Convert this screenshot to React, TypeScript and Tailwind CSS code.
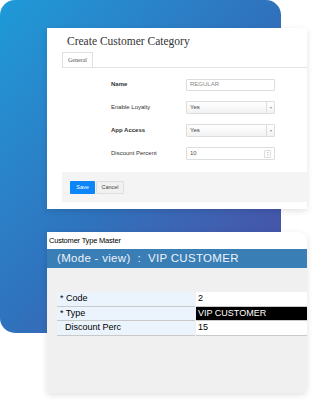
export default function App() {
  const rows = [
    { label: '* Code', value: '2' },
    { label: '* Type', value: 'VIP CUSTOMER', dark: true },
    { label: 'Discount Perc', value: '15', indent: true },
  ]

  return (
    <div className="w-[316px] h-[405px] bg-white overflow-hidden">
      {/* blue backdrop */}
      <div className="w-[281px] h-[333px] rounded-[15px] bg-gradient-to-br from-[#1d9ad8] via-[#2f72bd] to-[#4a48a0] pt-[28px] pl-[47px]">
        {/* Create Customer Category */}
        <div className="w-[260px] h-[181px] bg-white shadow-[0_2px_6px_rgba(0,0,0,0.12)] flex flex-col">
          <div className="pl-[20px] pt-[5px] h-[24px] text-[11.5px] text-[#333] font-['Liberation_Serif',serif]">
            Create Customer Category
          </div>
          <div className="ml-[15px] flex border-b border-[#e3e3e3] h-[16px]">
            <div className="w-[31px] border border-b-0 border-[#e0e0e0] text-[6px] text-[#555] flex items-center justify-center font-['Liberation_Serif',serif]">
              General
            </div>
          </div>
          <div className="flex flex-col gap-[10px] pt-[10px] font-['Liberation_Sans',sans-serif] text-[6px] text-[#333]">
            <FormRow label="Name" bold>
              <div className="w-[89px] h-[12px] border border-[#ddd] rounded-[1px] px-[3px] flex items-center text-[#888]">REGULAR</div>
            </FormRow>
            <FormRow label="Enable Loyalty">
              <Select value="Yes" />
            </FormRow>
            <FormRow label="App Access" bold>
              <Select value="Yes" />
            </FormRow>
            <FormRow label="Discount Percent">
              <div className="w-[89px] h-[13px] border border-[#ddd] rounded-[1px] px-[3px] flex items-center justify-between text-[#555]">
                <span>10</span>
                <span className="w-[7px] h-[8px] border border-[#ddd] rounded-[1px] text-[3px] leading-[3px] text-[#aaa] flex flex-col items-center justify-center">
                  <span>▴</span>
                  <span>▾</span>
                </span>
              </div>
            </FormRow>
          </div>
          <div className="mt-[12px] ml-[15px] h-[30px] bg-[#f4f4f4] flex items-center pl-[8px] gap-[1px] font-['Liberation_Sans',sans-serif] text-[5.5px]">
            <button className="w-[25px] h-[13px] bg-[#0b85f7] text-white rounded-[1px]">Save</button>
            <button className="w-[28px] h-[13px] bg-[#f1f1f1] text-[#444] border border-[#ddd] rounded-[1px]">Cancel</button>
          </div>
        </div>

        {/* Customer Type Master */}
        <div className="mt-[23px] w-[260px] h-[161px] bg-[#f0f0f0] rounded-tr-[8px] rounded-br-[6px] shadow-[0_2px_6px_rgba(0,0,0,0.12)] overflow-hidden flex flex-col font-['Liberation_Sans',sans-serif]">
          <div className="h-[17px] bg-white pl-[2px] flex items-center text-[7.5px] text-black tracking-[-0.2px]">
            Customer Type Master
          </div>
          <div className="h-[19px] bg-[#3a7eb6] pl-[10px] flex items-center text-[11.5px] text-[#eef3f8] whitespace-pre tracking-[0.3px]">
            (Mode - view)  :  VIP CUSTOMER
          </div>
          <div className="mt-[24px] ml-[10px] flex flex-col text-[9px] text-black">
            {rows.map((r) => (
              <div key={r.label} className="flex h-[14.7px]">
                <div className={`w-[138px] bg-[#ebf4fd] border-b-[1.5px] border-[#c9c9c9] flex items-center ${r.indent ? 'pl-[8px]' : 'pl-[3px]'}`}>
                  {r.label}
                </div>
                <div
                  className={`flex-1 ml-[1px] flex items-center pl-[2px] border-b-[1.5px] border-[#c9c9c9] ${
                    r.dark ? 'bg-black text-white' : 'bg-white text-black'
                  }`}
                >
                  {r.value}
                </div>
              </div>
            ))}
          </div>
        </div>
      </div>
    </div>
  )
}

function FormRow({ label, bold, children }: { label: string; bold?: boolean; children: React.ReactNode }) {
  return (
    <div className="flex items-center h-[13px]">
      <div className={`w-[75px] pl-[64px] box-content whitespace-nowrap ${bold ? 'font-bold' : ''}`}>{label}</div>
      {children}
    </div>
  )
}

function Select({ value }: { value: string }) {
  return (
    <div className="w-[89px] h-[13px] border border-[#ddd] rounded-[1px] pl-[3px] flex items-center justify-between bg-gradient-to-b from-white to-[#f2f2f2] text-[#444]">
      <span>{value}</span>
      <span className="w-[8px] h-full border-l border-[#ddd] flex items-center justify-center text-[4px] text-[#999]">▾</span>
    </div>
  )
}
